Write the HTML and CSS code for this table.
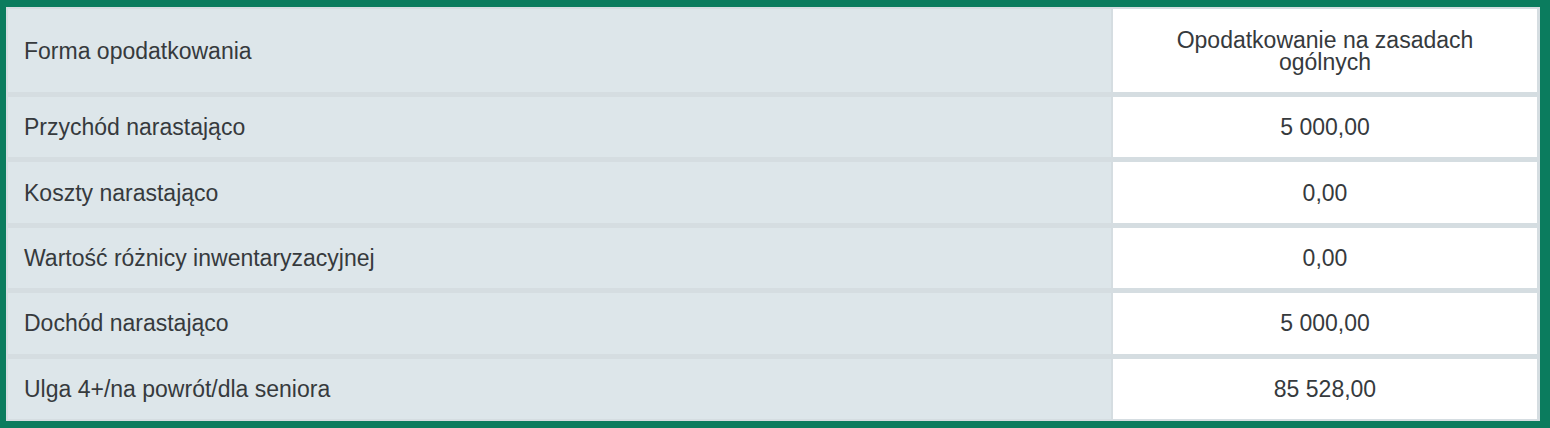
FILE: index.html
```html
<!DOCTYPE html>
<html lang="pl">
<head>
  <meta charset="UTF-8" />
  <meta name="viewport" content="width=device-width, initial-scale=1" />
  <title>Podsumowanie</title>
  <link rel="stylesheet" href="styles.css">
</head>
<body>
  <!-- Tax summary table -->
  <div class="summary">
    <div class="summary-grid">
      <div class="label first">Forma opodatkowania</div>
      <div class="value">Opodatkowanie na zasadach ogólnych</div>

      <div class="label">Przychód narastająco</div>
      <div class="value">5 000,00</div>

      <div class="label">Koszty narastająco</div>
      <div class="value">0,00</div>

      <div class="label">Wartość różnicy inwentaryzacyjnej</div>
      <div class="value">0,00</div>

      <div class="label">Dochód narastająco</div>
      <div class="value">5 000,00</div>

      <div class="label">Ulga 4+/na powrót/dla seniora</div>
      <div class="value">85 528,00</div>
    </div>
  </div>
</body>
</html>
```

FILE: styles.css
```css
html, body {
  margin: 0;
  padding: 0;
  height: 100%;
}

body {
  font-family: "Liberation Sans", Arial, sans-serif;
  background-color: #0b7c5e;
}

.summary {
  box-sizing: border-box;
  height: 100vh;
  border-style: solid;
  border-color: #0b7c5e;
  border-width: 7px 10px 7px 6px;
  padding: 2px 3px 2px 2px;
  background-color: #d5dde1;
}

.summary-grid {
  display: grid;
  grid-template-columns: 1fr 424px;
  grid-template-rows: 83px repeat(5, 1fr);
  column-gap: 2px;
  row-gap: 5px;
  height: 100%;
}

.label,
.value {
  display: flex;
  align-items: center;
  font-size: 23px;
  line-height: 22px;
  color: #363a3d;
}

.label {
  background-color: #dde6ea;
  padding: 0 16px;
}

.value {
  background-color: #fff;
  justify-content: center;
  text-align: center;
  padding: 0 20px;
}
```
